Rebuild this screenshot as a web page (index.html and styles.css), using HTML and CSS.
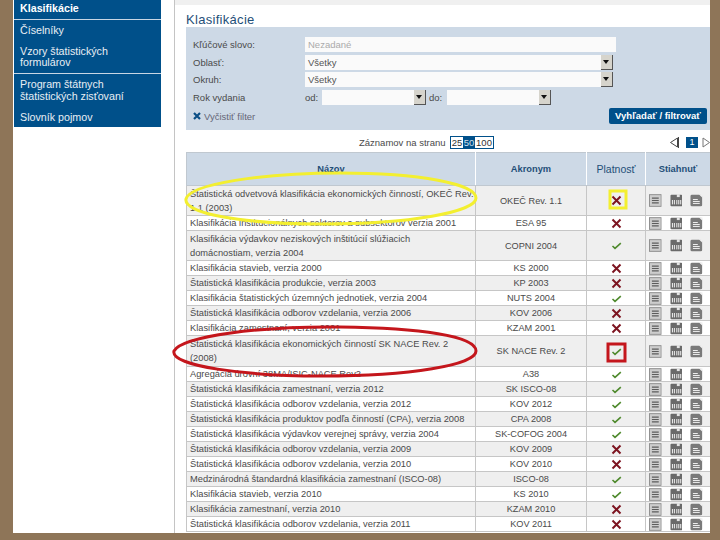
FILE: index.html
```html
<!DOCTYPE html>
<html lang="sk">
<head>
<meta charset="utf-8">
<title>Klasifikácie</title>
<link rel="stylesheet" href="styles.css">
</head>
<body>
<svg class="sprite" width="0" height="0" aria-hidden="true">
  <symbol id="i-doc" viewBox="0 0 13 13">
    <rect x="0.5" y="0.5" width="12" height="12" fill="#cdcdcd" stroke="#8f8f8f"/>
    <path d="M3 4h7M3 6.500h7M3 9h7" stroke="#5c5c5c" stroke-width="1.200"/>
  </symbol>
  <symbol id="i-a" viewBox="0 0 13 13">
    <rect x="0.5" y="0.5" width="12" height="12" rx="1" fill="#6a6a6a"/>
    <rect x="7" y="0" width="3" height="3" fill="#e4e4e4"/>
    <path d="M2.500 6v4.500M4.500 6v4.500M7 6v4.500M9 6v4.500M11 6v4.500" stroke="#f4f4f4"/>
  </symbol>
  <symbol id="i-b" viewBox="0 0 13 13">
    <rect x="0.5" y="0.5" width="12" height="12" rx="1.500" fill="#7a7a7a"/>
    <path d="M9 0h4v4z" fill="#f0f0f0"/>
    <path d="M3 5.500h5M3 7.500h7M3 9.500h7" stroke="#f4f4f4"/>
  </symbol>
  <symbol id="i-x" viewBox="0 0 11 11">
    <path d="M1.500 1.500l8 8M9.500 1.500l-8 8" stroke="#7d1420" stroke-width="2"/>
  </symbol>
  <symbol id="i-ok" viewBox="0 0 11 11">
    <path d="M1.500 6l2.500 2.300L9.800 3.200" fill="none" stroke="#4f8a2d" stroke-width="1.600"/>
  </symbol>
</svg>

<div class="page">
  <nav class="side">
    <a class="side-item side-active">Klasifikácie</a>
    <div class="side-group side-rule">
      <a class="side-item side-plain">Číselníky</a>
      <a class="side-item">Vzory štatistických<br>formulárov</a>
    </div>
    <div class="side-group">
      <a class="side-item">Program štátnych<br>štatistických zisťovaní</a>
      <a class="side-item side-plain">Slovník pojmov</a>
    </div>
  </nav>

  <main class="main">
    <div class="topstrip"></div>
    <div class="content">
      <h1 class="title">Klasifikácie</h1>

      <form class="filter">
        <div class="frow">
          <span class="flabel">Kľúčové slovo:</span>
          <div class="field field-full muted">Nezadané</div>
        </div>
        <div class="frow">
          <span class="flabel">Oblasť:</span>
          <div class="field field-select"><span>Všetky</span><i class="arrow"></i></div>
        </div>
        <div class="frow">
          <span class="flabel">Okruh:</span>
          <div class="field field-select"><span>Všetky</span><i class="arrow"></i></div>
        </div>
        <div class="frow">
          <span class="flabel">Rok vydania</span>
          <span class="from">od:</span>
          <div class="field field-date"><span></span><i class="arrow"></i></div>
          <span class="to">do:</span>
          <div class="field field-date"><span></span><i class="arrow"></i></div>
        </div>
        <div class="frow frow-last">
          <span class="clear"><svg class="clear-x" width="8" height="8" viewBox="0 0 8 8"><path d="M1 1l6 6M7 1l-6 6" stroke="#0b4f86" stroke-width="2.2"/></svg>Vyčistiť filter</span>
          <span class="go">Vyhľadať / filtrovať</span>
        </div>
      </form>

      <div class="pager">
        <span class="pager-label">Záznamov na stranu</span>
        <span class="sizes"><b>25</b><b class="size-on">50</b><b>100</b></span>
        <span class="pages">
          <svg class="prev" width="10" height="11" viewBox="0 0 10 11"><path d="M8.500 1L1.500 5.500 8.500 10z" fill="#fff" stroke="#444"/><path d="M9.500 0v11" stroke="#444"/></svg>
          <b class="page-on">1</b>
          <svg width="8" height="11" viewBox="0 0 8 11"><path d="M1 1l6.500 4.500L1 10z" fill="#fff" stroke="#777"/></svg>
        </span>
      </div>

      <table class="grid">
        <colgroup><col class="c1"><col class="c2"><col class="c3"><col class="c4"></colgroup>
        <thead>
          <tr><th class="th-b">Názov</th><th class="th-b">Akronym</th><th>Platnosť</th><th class="th-b">Stiahnuť</th></tr>
        </thead>
        <tbody>
          <tr class="tall"><td>Štatistická odvetvová klasifikácia ekonomických činností, OKEČ Rev. 1.1 (2003)</td><td>OKEČ Rev. 1.1</td><td><svg class="st"><use href="#i-x"/></svg></td><td><span class="dl"><svg><use href="#i-doc"/></svg><svg><use href="#i-a"/></svg><svg><use href="#i-b"/></svg></span></td></tr>
          <tr><td>Klasifikácia inštitucionálnych sektorov a subsektorov verzia 2001</td><td>ESA 95</td><td><svg class="st"><use href="#i-x"/></svg></td><td><span class="dl"><svg><use href="#i-doc"/></svg><svg><use href="#i-a"/></svg><svg><use href="#i-b"/></svg></span></td></tr>
          <tr class="tall"><td>Klasifikácia výdavkov neziskových inštitúcií slúžiacich domácnostiam, verzia 2004</td><td>COPNI 2004</td><td><svg class="st"><use href="#i-ok"/></svg></td><td><span class="dl"><svg><use href="#i-doc"/></svg><svg><use href="#i-a"/></svg><svg><use href="#i-b"/></svg></span></td></tr>
          <tr><td>Klasifikácia stavieb, verzia 2000</td><td>KS 2000</td><td><svg class="st"><use href="#i-x"/></svg></td><td><span class="dl"><svg><use href="#i-doc"/></svg><svg><use href="#i-a"/></svg><svg><use href="#i-b"/></svg></span></td></tr>
          <tr><td>Štatistická klasifikácia produkcie, verzia 2003</td><td>KP 2003</td><td><svg class="st"><use href="#i-x"/></svg></td><td><span class="dl"><svg><use href="#i-doc"/></svg><svg><use href="#i-a"/></svg><svg><use href="#i-b"/></svg></span></td></tr>
          <tr><td>Klasifikácia štatistických územných jednotiek, verzia 2004</td><td>NUTS 2004</td><td><svg class="st"><use href="#i-ok"/></svg></td><td><span class="dl"><svg><use href="#i-doc"/></svg><svg><use href="#i-a"/></svg><svg><use href="#i-b"/></svg></span></td></tr>
          <tr><td>Štatistická klasifikácia odborov vzdelania, verzia 2006</td><td>KOV 2006</td><td><svg class="st"><use href="#i-x"/></svg></td><td><span class="dl"><svg><use href="#i-doc"/></svg><svg><use href="#i-a"/></svg><svg><use href="#i-b"/></svg></span></td></tr>
          <tr><td>Klasifikácia zamestnaní, verzia 2001</td><td>KZAM 2001</td><td><svg class="st"><use href="#i-x"/></svg></td><td><span class="dl"><svg><use href="#i-doc"/></svg><svg><use href="#i-a"/></svg><svg><use href="#i-b"/></svg></span></td></tr>
          <tr class="tall"><td>Štatistická klasifikácia ekonomických činností SK NACE Rev. 2 (2008)</td><td>SK NACE Rev. 2</td><td><svg class="st"><use href="#i-ok"/></svg></td><td><span class="dl"><svg><use href="#i-doc"/></svg><svg><use href="#i-a"/></svg><svg><use href="#i-b"/></svg></span></td></tr>
          <tr><td>Agregácia úrovní 38MA/ISIC-NACE Rev2</td><td>A38</td><td><svg class="st"><use href="#i-ok"/></svg></td><td><span class="dl"><svg><use href="#i-doc"/></svg><svg><use href="#i-a"/></svg><svg><use href="#i-b"/></svg></span></td></tr>
          <tr><td>Štatistická klasifikácia zamestnaní, verzia 2012</td><td>SK ISCO-08</td><td><svg class="st"><use href="#i-ok"/></svg></td><td><span class="dl"><svg><use href="#i-doc"/></svg><svg><use href="#i-a"/></svg><svg><use href="#i-b"/></svg></span></td></tr>
          <tr><td>Štatistická klasifikácia odborov vzdelania, verzia 2012</td><td>KOV 2012</td><td><svg class="st"><use href="#i-ok"/></svg></td><td><span class="dl"><svg><use href="#i-doc"/></svg><svg><use href="#i-a"/></svg><svg><use href="#i-b"/></svg></span></td></tr>
          <tr><td>Štatistická klasifikácia produktov podľa činností (CPA), verzia 2008</td><td>CPA 2008</td><td><svg class="st"><use href="#i-ok"/></svg></td><td><span class="dl"><svg><use href="#i-doc"/></svg><svg><use href="#i-a"/></svg><svg><use href="#i-b"/></svg></span></td></tr>
          <tr><td>Štatistická klasifikácia výdavkov verejnej správy, verzia 2004</td><td>SK-COFOG 2004</td><td><svg class="st"><use href="#i-ok"/></svg></td><td><span class="dl"><svg><use href="#i-doc"/></svg><svg><use href="#i-a"/></svg><svg><use href="#i-b"/></svg></span></td></tr>
          <tr><td>Štatistická klasifikácia odborov vzdelania, verzia 2009</td><td>KOV 2009</td><td><svg class="st"><use href="#i-x"/></svg></td><td><span class="dl"><svg><use href="#i-doc"/></svg><svg><use href="#i-a"/></svg><svg><use href="#i-b"/></svg></span></td></tr>
          <tr><td>Štatistická klasifikácia odborov vzdelania, verzia 2010</td><td>KOV 2010</td><td><svg class="st"><use href="#i-x"/></svg></td><td><span class="dl"><svg><use href="#i-doc"/></svg><svg><use href="#i-a"/></svg><svg><use href="#i-b"/></svg></span></td></tr>
          <tr><td>Medzinárodná štandardná klasifikácia zamestnaní (ISCO-08)</td><td>ISCO-08</td><td><svg class="st"><use href="#i-ok"/></svg></td><td><span class="dl"><svg><use href="#i-doc"/></svg><svg><use href="#i-a"/></svg><svg><use href="#i-b"/></svg></span></td></tr>
          <tr><td>Klasifikácia stavieb, verzia 2010</td><td>KS 2010</td><td><svg class="st"><use href="#i-ok"/></svg></td><td><span class="dl"><svg><use href="#i-doc"/></svg><svg><use href="#i-a"/></svg><svg><use href="#i-b"/></svg></span></td></tr>
          <tr><td>Klasifikácia zamestnaní, verzia 2010</td><td>KZAM 2010</td><td><svg class="st"><use href="#i-x"/></svg></td><td><span class="dl"><svg><use href="#i-doc"/></svg><svg><use href="#i-a"/></svg><svg><use href="#i-b"/></svg></span></td></tr>
          <tr><td>Štatistická klasifikácia odborov vzdelania, verzia 2011</td><td>KOV 2011</td><td><svg class="st"><use href="#i-x"/></svg></td><td><span class="dl"><svg><use href="#i-doc"/></svg><svg><use href="#i-a"/></svg><svg><use href="#i-b"/></svg></span></td></tr>
        </tbody>
      </table>
    </div>
  </main>

  <svg class="marks" width="720" height="540" viewBox="0 0 720 540" aria-hidden="true">
    <path class="mark-y" d="M186 199C190 184 262 173 340 173C420 173 476 184 476 198C476 212 410 224 322 224C240 224 183 213 186 199Z"/>
    <rect class="mark-y" x="610" y="191" width="16" height="17"/>
    <path class="mark-r" d="M174 351C182 336 262 326 340 327C420 328 476 336 476 351C476 365 410 376 322 376C245 376 170 366 174 351Z"/>
    <rect class="mark-r" x="608" y="344" width="17" height="17"/>
  </svg>
</div>
</body>
</html>
```

FILE: styles.css
```css
* { box-sizing: border-box; }

html, body { margin: 0; height: 100%; }

body {
  background: #8e7558;
  font-family: "Liberation Sans", Arial, sans-serif;
  font-size: 9.5px;
  color: #4a4a4a;
  overflow: hidden;
}

.sprite { position: absolute; }

.page {
  position: relative;
  display: flex;
  width: 697px;
  height: 533px;
  margin-left: 13px;
  background: #fff;
  overflow: hidden;
}

.marks {
  position: absolute;
  left: -13px;
  top: 0;
  pointer-events: none;
}

.mark-y { fill: none; stroke: #f3ef30; stroke-width: 3; }
.mark-r { fill: none; stroke: #c4161c; stroke-width: 3; }

/* sidebar */
.side {
  flex: 0 0 147px;
  height: 127px;
  margin-left: 1px;
  background: #00508a;
  color: #e8eef4;
  font-size: 10.7px;
  line-height: 11.5px;
}

.side-item { display: block; padding-left: 6px; }

.side-active {
  height: 20px;
  padding-top: 3px;
  font-weight: bold;
  color: #fff;
  border-bottom: 1px solid #c8d6e4;
}

.side-rule {
  height: 54px;
  padding-top: 5px;
  border-bottom: 1px solid #c8d6e4;
}

.side-plain { padding-top: 0; }
.side-rule .side-item + .side-item { margin-top: 9px; }

.side-group:last-child { padding-top: 5px; }
.side-group:last-child .side-item + .side-item { margin-top: 10px; }

/* main */
.main {
  flex: 1;
  min-width: 0;
  margin-left: 13px;
  border-left: 1px solid #c4c4c4;
}

.topstrip { height: 5px; background: #f0f0f0; }

.content { padding-left: 11px; }

.title {
  margin: 0;
  height: 22px;
  padding-top: 8px;
  font-size: 13px;
  line-height: 14px;
  font-weight: normal;
  color: #1f4f78;
  letter-spacing: 0.3px;
}

/* filter */
.filter {
  display: flex;
  flex-direction: column;
  gap: 2.5px;
  height: 103px;
  padding: 10px 3px 0 7px;
  background: #cdd9e6;
}

.frow { display: flex; align-items: center; height: 15px; }

.flabel { flex: 0 0 112px; }

.field {
  height: 15px;
  line-height: 15px;
  background: #fafafa;
  padding-left: 3px;
  color: #555;
  display: flex;
}

.field span { flex: 1; }
.muted { color: #aaa; }
.field-full { width: 311px; }
.field-select { width: 308px; }
.field-date { width: 104px; }

.arrow {
  flex: 0 0 12px;
  height: 15px;
  position: relative;
  background: #d6d4cc;
  border-right: 1px solid #555;
  border-bottom: 1px solid #555;
}

.arrow::after {
  content: "";
  position: absolute;
  left: 2px;
  top: 5px;
  border: 3px solid transparent;
  border-top: 4px solid #111;
  border-bottom: 0;
}

.from { flex: 0 0 17px; }
.to { flex: 0 0 21px; padding-left: 3px; }

.frow-last { justify-content: space-between; height: 16px; margin-top: 1px; }

.clear { display: flex; align-items: center; gap: 3px; color: #667; }

.go {
  width: 98px;
  height: 16px;
  line-height: 16px;
  text-align: center;
  background: #00508a;
  border-radius: 2px;
  color: #fff;
  font-weight: bold;
  font-size: 9.5px;
}

/* pager */
.pager {
  display: flex;
  align-items: center;
  height: 22px;
  padding-top: 3px;
  padding-left: 173px;
}

.pager-label { flex: 0 0 91px; white-space: nowrap; }

.sizes {
  display: flex;
  width: 44px;
  height: 13px;
  line-height: 11px;
  border: 1px solid #00508a;
}

.sizes b { font-weight: normal; flex: 0 0 12px; text-align: center; color: #333; }
.sizes b:last-child { flex: 1; }
.sizes .size-on { background: #00508a; color: #cfe0ee; }

.pages {
  display: flex;
  align-items: center;
  gap: 4px;
  margin-left: auto;
}

.prev { margin-right: 3px; }

.page-on {
  width: 12px;
  height: 11px;
  line-height: 11px;
  text-align: center;
  background: #00508a;
  color: #fff;
  font-size: 9px;
  font-weight: normal;
}

/* table */
.grid {
  width: 524px;
  table-layout: fixed;
  border-collapse: collapse;
  line-height: 14px;
}

.c1 { width: 289px; }
.c2 { width: 111px; }
.c3 { width: 59px; }
.c4 { width: 65px; }

.grid th {
  height: 33px;
  background: #cdd9e6;
  border: 1px solid #c0c8d0;
  border-right-color: #fff;
  color: #1f4f78;
  font-weight: normal;
  font-size: 10.5px;
  padding: 0;
}

.grid .th-b { font-weight: bold; font-size: 9.3px; }

.grid td {
  height: 15px;
  padding: 0 3px;
  border: 1px solid #c6c6c6;
  text-align: center;
  vertical-align: middle;
  overflow: hidden;
  white-space: nowrap;
  font-size: 9.2px;
}

.grid td:first-child { text-align: left; font-size: 9.3px; padding-right: 1px; }
.grid td:last-child { padding: 0 7px 0 3px; }

.grid tr:nth-child(odd) td { background: #efefef; }

.grid .tall td { height: 30px; white-space: normal; }
.grid tr:nth-child(9) td { height: 31px; }

.st { display: block; width: 11px; height: 11px; margin: 0 auto; }

.dl { display: flex; justify-content: center; gap: 8px; height: 13px; }
.dl svg { width: 13px; height: 13px; display: block; }
```
